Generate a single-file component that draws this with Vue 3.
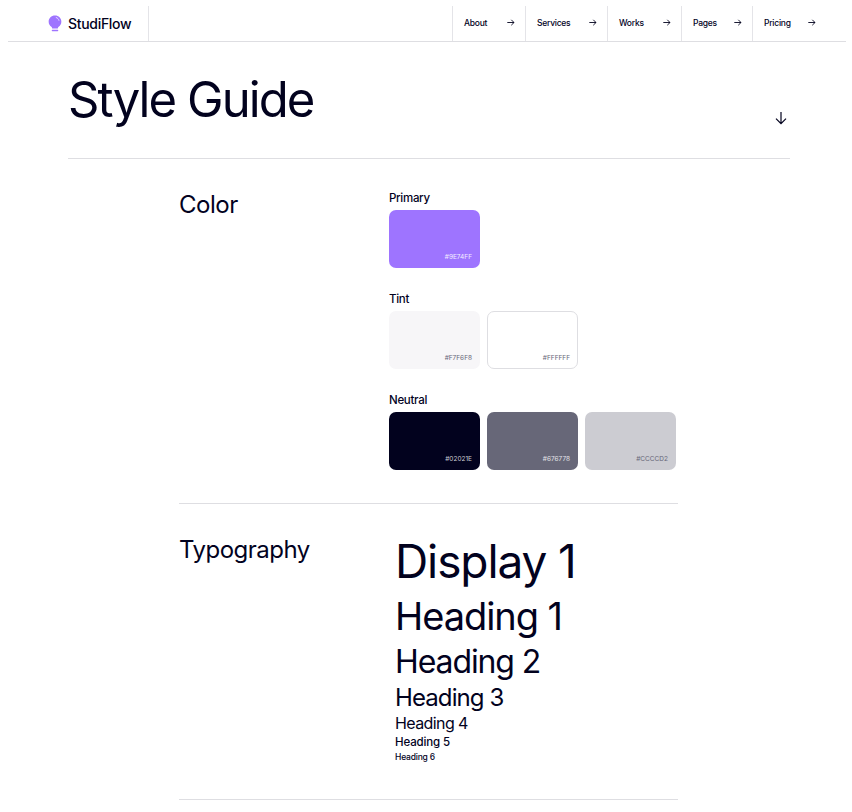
<template>
  <div class="page">
    <header class="topbar">
      <div class="brand">
        <svg class="logo" width="14" height="17" viewBox="0 0 15 18">
          <path d="M7.5 0.5C11.4 0.5 14.3 3.4 14.3 7C14.3 9.6 12.9 11.2 11.4 12.6C10.8 13.2 10.6 13.8 10.5 14.4H4.5C4.4 13.8 4.2 13.2 3.6 12.6C2.1 11.2 0.7 9.6 0.7 7C0.7 3.4 3.6 0.5 7.5 0.5Z" fill="#9E74FF" />
          <path d="M8.8 2.6C10.3 3 11.4 4.2 11.7 5.6" fill="none" stroke="#e6dbff" stroke-width="1" stroke-linecap="round" />
          <rect x="4" y="15.8" width="7" height="1.5" rx="0.7" fill="#9E74FF" />
        </svg>
        <span class="brand-name">StudiFlow</span>
      </div>
      <nav class="nav">
        <a v-for="item in navItems" :key="item.label" class="nav-item" :style="{ width: item.width + 'px' }">
          <span>{{ item.label }}</span>
          <svg width="8" height="7" viewBox="0 0 8 7" fill="none" stroke="#02021E" stroke-width="0.9">
            <path d="M0.3 3.5H7M4.3 0.8L7 3.5L4.3 6.2" />
          </svg>
        </a>
      </nav>
    </header>

    <main class="content">
      <div class="hero">
        <h1>Style Guide</h1>
        <svg class="down" width="14" height="14" viewBox="0 0 14 14" fill="none" stroke="#02021E" stroke-width="1.2">
          <path d="M7 1V12.6M2 7.6L7 12.6L12 7.6" />
        </svg>
      </div>

      <section class="section color-section">
        <h2>Color</h2>
        <div class="groups">
          <div v-for="group in colorGroups" :key="group.name" class="group">
            <div class="group-name">{{ group.name }}</div>
            <div class="swatches">
              <div
                v-for="swatch in group.swatches"
                :key="swatch.hex"
                class="swatch"
                :class="{ outlined: swatch.outlined }"
                :style="{ background: swatch.hex, color: swatch.text }"
              >
                {{ swatch.hex }}
              </div>
            </div>
          </div>
        </div>
      </section>

      <section class="section type-section">
        <h2>Typography</h2>
        <div class="samples">
          <div class="display">Display 1</div>
          <div class="h1">Heading 1</div>
          <div class="h2">Heading 2</div>
          <div class="h3">Heading 3</div>
          <div class="h4">Heading 4</div>
          <div class="h5">Heading 5</div>
          <div class="h6">Heading 6</div>
        </div>
      </section>
    </main>
  </div>
</template>

<script setup>
const navItems = [
  { label: 'About', width: 73 },
  { label: 'Services', width: 82 },
  { label: 'Works', width: 74 },
  { label: 'Pages', width: 71 },
  { label: 'Pricing', width: 94 }
]

const colorGroups = [
  {
    name: 'Primary',
    swatches: [{ hex: '#9E74FF', text: '#f3edff' }]
  },
  {
    name: 'Tint',
    swatches: [
      { hex: '#F7F6F8', text: '#676778' },
      { hex: '#FFFFFF', text: '#676778', outlined: true }
    ]
  },
  {
    name: 'Neutral',
    swatches: [
      { hex: '#02021E', text: '#CCCCD2' },
      { hex: '#676778', text: '#e4e4e8' },
      { hex: '#CCCCD2', text: '#676778' }
    ]
  }
]
</script>

<style>
html,
body {
  background: #fff;
}
</style>

<style scoped>
.page {
  width: 852px;
  height: 812px;
  overflow: hidden;
  box-sizing: border-box;
  padding: 0 6px 0 8px;
  font-family: Inter, "Liberation Sans", sans-serif;
  color: #02021e;
}

.topbar {
  display: flex;
  justify-content: space-between;
  height: 42px;
  box-sizing: border-box;
  border-bottom: 1px solid #dedee2;
  padding-top: 6px;
}

.brand {
  display: flex;
  align-items: center;
  gap: 6px;
  width: 141px;
  box-sizing: border-box;
  padding: 0 0 1px 40px;
  border-right: 1px solid #e4e4e8;
}

.brand-name {
  font-size: 14px;
  font-weight: 500;
  letter-spacing: -0.3px;
}

.nav {
  display: flex;
}

.nav-item {
  display: flex;
  align-items: center;
  justify-content: space-between;
  box-sizing: border-box;
  padding: 0 10px 2px 11px;
  border-left: 1px solid #e4e4e8;
  font-size: 8.5px;
  font-weight: 450;
  letter-spacing: -0.25px;
}

.nav-item:last-child {
  padding-right: 30px;
}

.content {
  padding: 0 56px 0 60px;
}

.hero {
  display: flex;
  justify-content: space-between;
  align-items: flex-end;
  height: 117px;
  box-sizing: border-box;
  border-bottom: 1px solid #dedee2;
  padding: 0 2px 33px 0;
}

h1 {
  margin: 33px 0 0;
  font-size: 49px;
  font-weight: 400;
  line-height: 1;
  letter-spacing: -1.9px;
  align-self: flex-start;
}

.down {
  display: block;
}

.section {
  display: flex;
  width: 499px;
  margin-left: 111px;
  box-sizing: border-box;
}

h2 {
  margin: 1px 0 0;
  width: 210px;
  flex-shrink: 0;
  font-size: 24px;
  font-weight: 400;
  line-height: 30px;
  letter-spacing: -0.5px;
}

.color-section {
  height: 345px;
  padding-top: 30px;
  border-bottom: 1px solid #dedee2;
}

.groups {
  display: flex;
  flex-direction: column;
  gap: 22px;
}

.group-name {
  font-size: 11.5px;
  line-height: 14px;
  margin-top: 2px;
  margin-bottom: 5px;
  font-weight: 500;
  letter-spacing: -0.3px;
}

.swatches {
  display: flex;
  gap: 7px;
}

.swatch {
  display: flex;
  align-items: flex-end;
  justify-content: flex-end;
  width: 91px;
  height: 58px;
  box-sizing: border-box;
  padding: 0 8px 7px 0;
  border-radius: 7px;
  font-size: 6.5px;
  line-height: 8px;
}

.outlined {
  border: 1px solid #dedee2;
  padding: 0 7px 6px 0;
}

.type-section {
  height: 296px;
  padding-top: 30px;
  border-bottom: 1px solid #dedee2;
}

.samples {
  padding-left: 6px;
}

.samples div {
  white-space: nowrap;
}

.display {
  font-size: 46px;
  line-height: 56px;
  margin-top: -1px;
  letter-spacing: -1.1px;
}

.h1 {
  font-size: 38px;
  line-height: 46px;
  margin-top: 4px;
  letter-spacing: -1.05px;
}

.h2 {
  font-size: 32px;
  line-height: 38px;
  margin-top: 4px;
  letter-spacing: -1.1px;
}

.h3 {
  font-size: 24px;
  line-height: 30px;
  margin-top: 2px;
  letter-spacing: -0.9px;
}

.h4 {
  font-size: 16px;
  line-height: 20px;
  letter-spacing: -0.6px;
}

.h5 {
  font-size: 11.5px;
  line-height: 16px;
  margin-top: 1px;
  letter-spacing: -0.15px;
  font-weight: 500;
}

.h6 {
  font-size: 8.5px;
  line-height: 14px;
  letter-spacing: -0.2px;
  font-weight: 500;
}
</style>
